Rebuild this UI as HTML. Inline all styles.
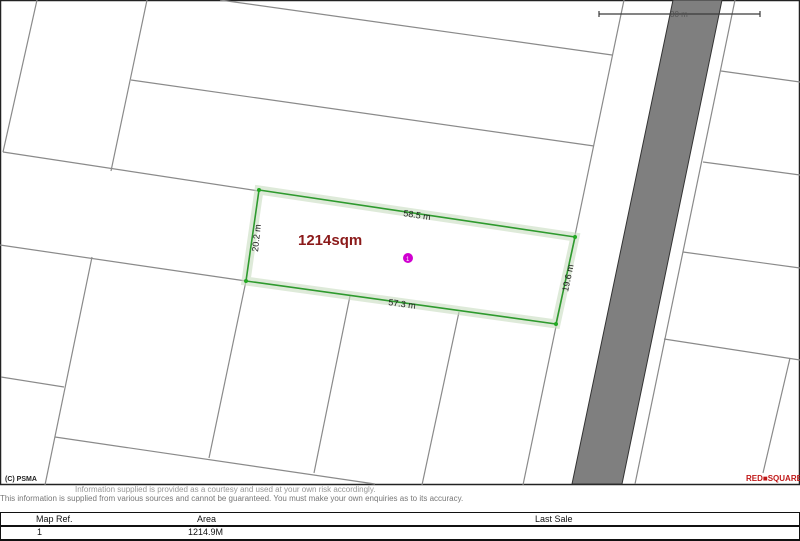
<!DOCTYPE html>
<html><head><style>
body{margin:0;width:800px;height:540px;background:#fff;overflow:hidden;font-family:"Liberation Sans",sans-serif;position:relative}
.t{position:absolute;font-size:10px;color:#111;white-space:nowrap}
</style></head><body>
<svg width="800" height="486" style="position:absolute;left:0;top:0" xmlns="http://www.w3.org/2000/svg">
<rect x="0.5" y="0.5" width="799" height="484" fill="#fff" stroke="#222" stroke-width="1.5"/>
<g stroke="#8a8a8a" stroke-width="1.2" fill="none">
<line x1="37" y1="0" x2="3" y2="152"/>
<line x1="147" y1="0" x2="111" y2="171"/>
<line x1="220" y1="0" x2="612" y2="55"/>
<line x1="131" y1="80" x2="594" y2="146"/>
<line x1="3" y1="152" x2="259" y2="191"/>
<line x1="624" y1="0" x2="523" y2="485"/>
<line x1="0" y1="245" x2="246" y2="281"/>
<line x1="92" y1="257" x2="45" y2="485"/>
<line x1="1" y1="377" x2="64" y2="387"/>
<line x1="55" y1="437" x2="375" y2="484"/>
<line x1="246" y1="281" x2="209" y2="458"/>
<line x1="350" y1="296" x2="314" y2="473"/>
<line x1="459" y1="312" x2="422" y2="485"/>
<line x1="735" y1="0" x2="635" y2="484"/>
<line x1="721" y1="71" x2="800" y2="82"/>
<line x1="703" y1="162" x2="800" y2="175"/>
<line x1="683" y1="252" x2="800" y2="268"/>
<line x1="664" y1="339" x2="800" y2="360"/>
<line x1="790" y1="358" x2="763" y2="473"/>
</g>
<polygon points="673,0 722,0 622,484 572,484" fill="#7f7f7f" stroke="#333" stroke-width="1"/>
<g stroke="#3a3a3a" stroke-width="1.2"><line x1="599" y1="14" x2="760" y2="14"/><line x1="599" y1="11" x2="599" y2="17"/><line x1="760" y1="11" x2="760" y2="17"/></g>
<text x="670" y="17" font-size="8" fill="#555" font-family="Liberation Sans">30 m</text>
<polygon points="259,190 575,237 556,324 246,281" fill="none" stroke="#c8dcc0" stroke-width="9" opacity="0.6"/>
<polygon points="259,190 575,237 556,324 246,281" fill="none" stroke="#2e9a2e" stroke-width="1.6"/>
<g fill="#22aa22"><circle cx="259" cy="190" r="2"/><circle cx="575" cy="237" r="2"/><circle cx="556" cy="324" r="2"/><circle cx="246" cy="281" r="2"/></g>
<g font-family="Liberation Sans" font-size="9" fill="#222">
<text x="403" y="216" transform="rotate(8.5 403 216)">58.5 m</text>
<text x="388" y="305" transform="rotate(8 388 305)">57.3 m</text>
<text x="258" y="252" transform="rotate(-84 258 252)">20.2 m</text>
<text x="568" y="292" transform="rotate(-78 568 292)">19.6 m</text>
</g>
<text x="298" y="245" font-family="Liberation Sans" font-size="15" font-weight="bold" fill="#8b1a1a">1214sqm</text>
<circle cx="408" cy="258" r="5" fill="#d000d0"/>
<text x="406" y="261" font-size="6" fill="#fff" font-family="Liberation Sans">1</text>
<text x="5" y="481" font-size="7" font-weight="bold" fill="#222" font-family="Liberation Sans">(C) PSMA</text>
<text x="746" y="481" font-size="8" font-weight="bold" fill="#c01818" font-family="Liberation Sans">RED■SQUARE</text>
</svg>
<div class="t" style="left:75px;top:485px;font-size:8px;color:#999">Information supplied is provided as a courtesy and used at your own risk accordingly.</div>
<div class="t" style="left:0;top:494px;font-size:8px;color:#777">This information is supplied from various sources and cannot be guaranteed. You must make your own enquiries as to its accuracy.</div>
<div style="position:absolute;left:0;top:512px;width:798px;height:26px;border:1px solid #111;border-bottom-width:2px"></div>
<div style="position:absolute;left:0;top:525px;width:800px;height:2px;background:#111"></div>
<div class="t" style="left:36px;top:514px;font-size:9px">Map Ref.</div>
<div class="t" style="left:197px;top:514px;font-size:9px">Area</div>
<div class="t" style="left:535px;top:514px;font-size:9px">Last Sale</div>
<div class="t" style="left:37px;top:527px;font-size:9px">1</div>
<div class="t" style="left:188px;top:527px;font-size:9px">1214.9M</div>
</body></html>
